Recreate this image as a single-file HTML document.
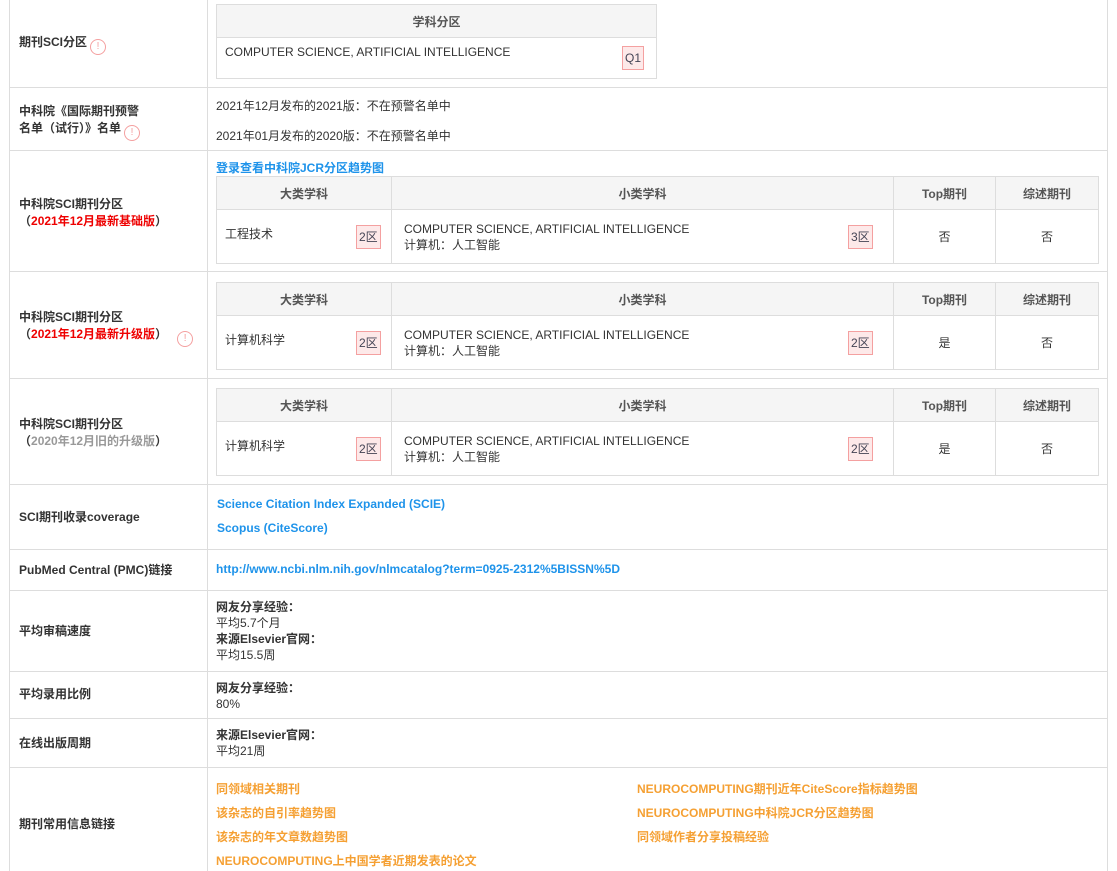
<!DOCTYPE html>
<html><head><meta charset="utf-8"><style>
*{margin:0;padding:0;box-sizing:border-box}
body{width:1117px;height:871px;background:#fff;position:relative;overflow:hidden;font-family:"Liberation Sans","Noto Sans CJK SC",sans-serif;font-size:12px;color:#333}
.a{position:absolute}
.hl{position:absolute;left:9px;width:1099px;height:1px;background:#ddd}
.vl{position:absolute;top:0;height:871px;width:1px;background:#ddd}
.lb{position:absolute;left:19px;font-weight:bold;line-height:17px;color:#333}
.red{color:#e00}
.gray{color:#999}
.ic{display:inline-block;width:16px;height:16px;border:1.5px solid #f4a0a0;border-radius:50%;color:#f4a0a0;font-size:10px;line-height:13px;text-align:center;font-weight:normal;vertical-align:-3px;margin-left:3px}
table{position:absolute;border-collapse:collapse}
td,th{border:1px solid #ddd;padding:0}
th{background:#f5f5f5;color:#555;font-weight:bold;height:33px;text-align:center}
.bd{display:inline-block;border:1px solid #f4a0a0;background:#fde9e9;color:#445;padding:0 2px;height:24px;line-height:22px;font-size:12px}
.blue{color:#1e93ea;font-weight:bold}
.org{color:#f5a033;font-weight:bold;position:absolute}
</style></head><body>
<div class="vl" style="left:9px"></div>
<div class="vl" style="left:207px"></div>
<div class="vl" style="left:1107px"></div>
<div class="hl" style="top:87px"></div>
<div class="hl" style="top:150px"></div>
<div class="hl" style="top:271px"></div>
<div class="hl" style="top:378px"></div>
<div class="hl" style="top:484px"></div>
<div class="hl" style="top:549px"></div>
<div class="hl" style="top:590px"></div>
<div class="hl" style="top:671px"></div>
<div class="hl" style="top:718px"></div>
<div class="hl" style="top:767px"></div>

<div class="lb" style="top:34px">期刊SCI分区<span class="ic">!</span></div>
<table style="left:216px;top:4px;width:441px">
<tr><th>学科分区</th></tr>
<tr><td style="height:41px;position:relative"><span class="a" style="left:8px;top:7px">COMPUTER SCIENCE, ARTIFICIAL INTELLIGENCE</span><span class="bd a" style="left:405px;top:8px;height:24px;line-height:22px">Q1</span></td></tr>
</table>

<div class="lb" style="top:103px">中科院《国际期刊预警<br>名单（试行）》名单<span class="ic">!</span></div>
<div class="a" style="left:216px;top:97px">2021年12月发布的2021版：不在预警名单中</div>
<div class="a" style="left:216px;top:127px">2021年01月发布的2020版：不在预警名单中</div>

<div class="a blue" style="left:216px;top:159px">登录查看中科院JCR分区趋势图</div>
<div class="lb" style="top:196px">中科院SCI期刊分区<br>（<span class="red">2021年12月最新基础版</span>）</div>
<div class="lb" style="top:309px">中科院SCI期刊分区<br>（<span class="red">2021年12月最新升级版</span>）<span class="ic" style="margin-left:10px">!</span></div>
<div class="lb" style="top:416px">中科院SCI期刊分区<br>（<span class="gray">2020年12月旧的升级版</span>）</div>

<table style="left:216px;top:176px;width:883px">
<tr><th style="width:175px">大类学科</th><th style="width:502px">小类学科</th><th style="width:102px">Top期刊</th><th>综述期刊</th></tr>
<tr style="height:54px"><td style="position:relative"><span class="a" style="left:8px;top:15px">工程技术</span><span class="bd a" style="left:139px;top:15px">2区</span></td>
<td style="position:relative"><span class="a" style="left:12px;top:11px;line-height:16px">COMPUTER SCIENCE, ARTIFICIAL INTELLIGENCE<br>计算机：人工智能</span><span class="bd a" style="left:456px;top:15px">3区</span></td>
<td style="text-align:center">否</td><td style="text-align:center">否</td></tr>
</table>

<table style="left:216px;top:282px;width:883px">
<tr><th style="width:175px">大类学科</th><th style="width:502px">小类学科</th><th style="width:102px">Top期刊</th><th>综述期刊</th></tr>
<tr style="height:54px"><td style="position:relative"><span class="a" style="left:8px;top:15px">计算机科学</span><span class="bd a" style="left:139px;top:15px">2区</span></td>
<td style="position:relative"><span class="a" style="left:12px;top:11px;line-height:16px">COMPUTER SCIENCE, ARTIFICIAL INTELLIGENCE<br>计算机：人工智能</span><span class="bd a" style="left:456px;top:15px">2区</span></td>
<td style="text-align:center">是</td><td style="text-align:center">否</td></tr>
</table>

<table style="left:216px;top:388px;width:883px">
<tr><th style="width:175px">大类学科</th><th style="width:502px">小类学科</th><th style="width:102px">Top期刊</th><th>综述期刊</th></tr>
<tr style="height:54px"><td style="position:relative"><span class="a" style="left:8px;top:15px">计算机科学</span><span class="bd a" style="left:139px;top:15px">2区</span></td>
<td style="position:relative"><span class="a" style="left:12px;top:11px;line-height:16px">COMPUTER SCIENCE, ARTIFICIAL INTELLIGENCE<br>计算机：人工智能</span><span class="bd a" style="left:456px;top:15px">2区</span></td>
<td style="text-align:center">是</td><td style="text-align:center">否</td></tr>
</table>

<div class="lb" style="top:509px">SCI期刊收录coverage</div>
<div class="a blue" style="left:217px;top:497px">Science Citation Index Expanded (SCIE)</div>
<div class="a blue" style="left:217px;top:521px">Scopus (CiteScore)</div>

<div class="lb" style="top:562px">PubMed Central (PMC)链接</div>
<div class="a blue" style="left:216px;top:562px">http://www.ncbi.nlm.nih.gov/nlmcatalog?term=0925-2312%5BISSN%5D</div>

<div class="lb" style="top:623px">平均审稿速度</div>
<div class="a" style="left:216px;top:599px;line-height:16px"><b>网友分享经验：</b><br>平均5.7个月<br><b>来源Elsevier官网：</b><br>平均15.5周</div>

<div class="lb" style="top:686px">平均录用比例</div>
<div class="a" style="left:216px;top:680px;line-height:16px"><b>网友分享经验：</b><br>80%</div>

<div class="lb" style="top:735px">在线出版周期</div>
<div class="a" style="left:216px;top:727px;line-height:16px"><b>来源Elsevier官网：</b><br>平均21周</div>

<div class="lb" style="top:816px">期刊常用信息链接</div>
<div class="org" style="left:216px;top:780px">同领域相关期刊</div>
<div class="org" style="left:216px;top:804px">该杂志的自引率趋势图</div>
<div class="org" style="left:216px;top:828px">该杂志的年文章数趋势图</div>
<div class="org" style="left:216px;top:852px">NEUROCOMPUTING上中国学者近期发表的论文</div>
<div class="org" style="left:637px;top:780px">NEUROCOMPUTING期刊近年CiteScore指标趋势图</div>
<div class="org" style="left:637px;top:804px">NEUROCOMPUTING中科院JCR分区趋势图</div>
<div class="org" style="left:637px;top:828px">同领域作者分享投稿经验</div>
</body></html>
